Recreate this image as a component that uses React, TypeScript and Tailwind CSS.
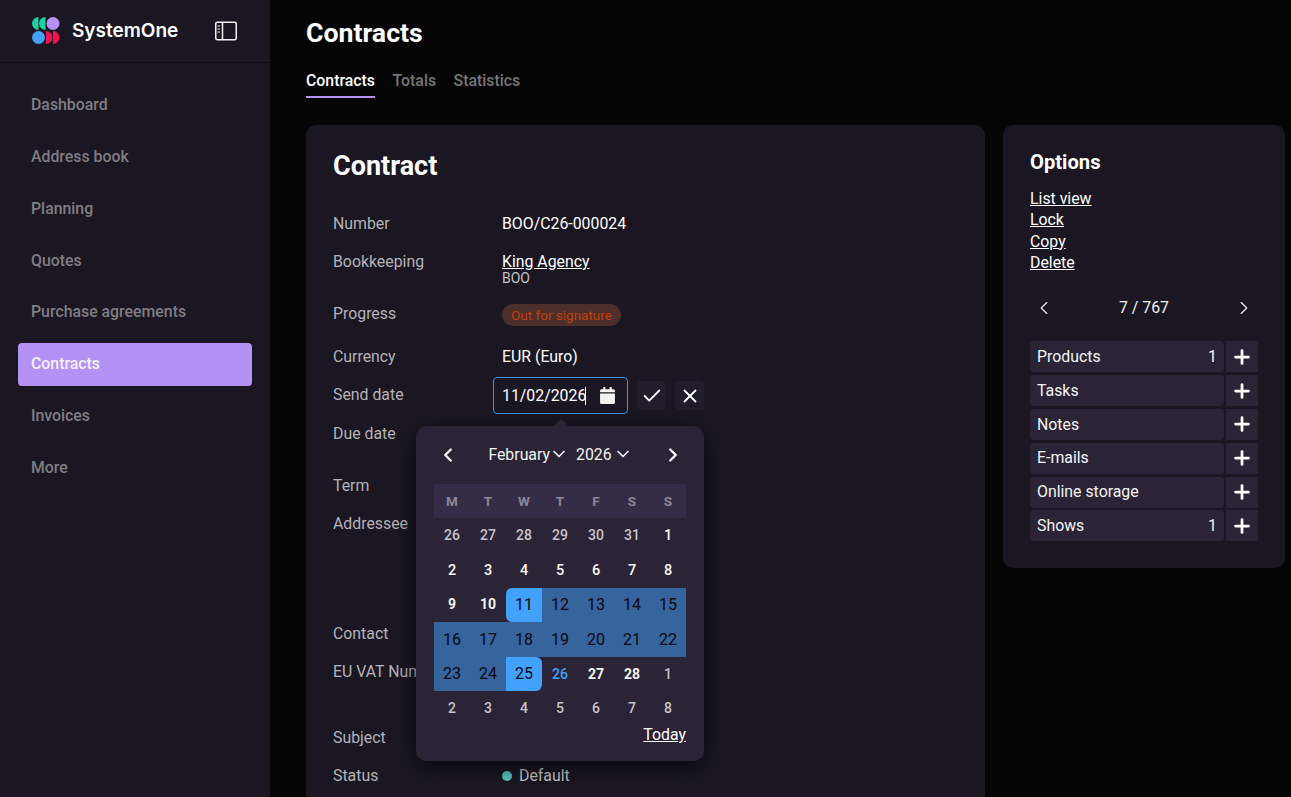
import { Check, ChevronDown, ChevronLeft, ChevronRight, Plus, X } from 'lucide-react'
import { FaCalendar } from 'react-icons/fa'

const navItems = ['Dashboard', 'Address book', 'Planning', 'Quotes', 'Purchase agreements', 'Contracts', 'Invoices', 'More']
const optionLinks = ['List view', 'Lock', 'Copy', 'Delete']
const optionRows = [
  { label: 'Products', count: 1 },
  { label: 'Tasks' },
  { label: 'Notes' },
  { label: 'E-mails' },
  { label: 'Online storage' },
  { label: 'Shows', count: 1 },
]
const weekDays = ['M', 'T', 'W', 'T', 'F', 'S', 'S']

type Day = { n: number; muted?: boolean }
const days: Day[] = [
  { n: 26, muted: true }, { n: 27, muted: true }, { n: 28, muted: true }, { n: 29, muted: true }, { n: 30, muted: true }, { n: 31, muted: true }, { n: 1 },
  { n: 2 }, { n: 3 }, { n: 4 }, { n: 5 }, { n: 6 }, { n: 7 }, { n: 8 },
  { n: 9 }, { n: 10 }, { n: 11 }, { n: 12 }, { n: 13 }, { n: 14 }, { n: 15 },
  { n: 16 }, { n: 17 }, { n: 18 }, { n: 19 }, { n: 20 }, { n: 21 }, { n: 22 },
  { n: 23 }, { n: 24 }, { n: 25 }, { n: 26 }, { n: 27 }, { n: 28 }, { n: 1, muted: true },
  { n: 2, muted: true }, { n: 3, muted: true }, { n: 4, muted: true }, { n: 5, muted: true }, { n: 6, muted: true }, { n: 7, muted: true }, { n: 8, muted: true },
]

const Logo = () => (
  <svg width="28" height="27" viewBox="0 0 28 27" aria-hidden="true">
    <path d="M6.5 0 A6.5 6.5 0 0 0 6.5 13 Z" fill="#1fd0a0" />
    <path d="M13.5 0 A6.5 6.5 0 0 0 13.5 13 Z" fill="#1fd0a0" />
    <circle cx="21" cy="6.5" r="6.5" fill="#b491f5" />
    <circle cx="6.5" cy="20.5" r="6.5" fill="#42a0ff" />
    <path d="M14 14 A6.5 6.5 0 0 1 14 27 Z" fill="#f5104f" />
    <path d="M21 14 A6.5 6.5 0 0 1 21 27 Z" fill="#f5104f" />
  </svg>
)

const PanelIcon = () => (
  <svg width="22" height="20" viewBox="0 0 22 20" fill="none" stroke="#f2f2f2" strokeWidth="1.5" aria-hidden="true">
    <rect x="0.75" y="1.25" width="20.5" height="17.5" rx="1.5" />
    <path d="M7.5 1.25 V18.75" />
    <path d="M2.5 5 H5 M2.5 8 H5 M2.5 11 H5" strokeWidth="1.2" />
  </svg>
)

const Row = ({ label, height, children }: { label: string; height: string; children?: React.ReactNode }) => (
  <div className={`flex ${height}`}>
    <div className="w-[169px] shrink-0 text-[#b4b2b8] leading-5">{label}</div>
    <div className="min-w-0 flex-1 leading-5 text-white">{children}</div>
  </div>
)

const DatePopover = () => (
  <div className="absolute left-[110px] top-[301px] z-10 h-[335px] w-[288px] rounded-[10px] bg-[#2a2436] px-[18px] shadow-[0_6px_24px_rgba(0,0,0,0.65)]">
    <div className="absolute -top-[7px] left-[138px] h-0 w-0 border-x-[7px] border-b-[7px] border-x-transparent border-b-[#2a2436]" />
    <div className="flex h-[58px] items-center justify-between pb-[1px]">
      <ChevronLeft size={22} strokeWidth={2.5} className="ml-[3px] text-white" />
      <div className="flex items-center text-[#f2f2f2]">
        <span>February</span>
        <ChevronDown size={20} strokeWidth={2} className="-ml-[1px]" />
        <span className="ml-[7px]">2026</span>
        <ChevronDown size={20} strokeWidth={2} className="ml-[1px]" />
      </div>
      <ChevronRight size={22} strokeWidth={2.5} className="mr-[2px] text-white" />
    </div>
    <div className="grid h-[34px] grid-cols-7 items-center bg-[#352d47] text-[13.5px] font-bold text-[#8c8794]">
      {weekDays.map((d, i) => (
        <span key={i} className="text-center">{d}</span>
      ))}
    </div>
    <div className="mt-[0.5px] grid auto-rows-[34.6px] grid-cols-7">
      {days.map((d, i) => {
        const start = i === 16
        const end = i === 30
        const inRange = i > 16 && i < 30
        const today = i === 31
        const firstWeeks = i >= 6 && i <= 13
        return (
          <div
            key={i}
            className={`flex items-center justify-center ${
              start ? 'rounded-tl-[6px] rounded-bl-[6px] bg-[#42a0ff] text-[16px] text-[#0a0812]'
              : end ? 'rounded-tr-[6px] rounded-br-[6px] bg-[#42a0ff] text-[16px] text-[#0a0812]'
              : inRange ? 'bg-[#36649c] text-[16px] text-[#0a0812]'
              : today ? 'text-[14px] font-medium text-[#42a0ff]'
              : d.muted ? 'text-[14px] font-medium text-[#c6c4ca]'
              : firstWeeks ? 'text-[14.5px] font-medium text-[#f8f8f8]'
              : 'text-[14px] font-bold text-[#f4f4f4]'
            }`}
          >
            {d.n}
          </div>
        )
      })}
    </div>
    <div className="-mt-[3px] text-right text-white underline">Today</div>
  </div>
)

export default function App() {
  return (
    <div className="flex h-[797px] w-[1291px] overflow-hidden bg-[#050505] text-[15.85px] [font-family:Roboto,sans-serif]">
      <aside className="h-full w-[270px] shrink-0 bg-[#1a1722]">
        <div className="flex h-[63px] items-center border-b border-[#0d0b12] pl-[32px] pb-[1px]">
          <Logo />
          <span className="mt-[1px] ml-[12px] w-[106px] text-[19px] font-semibold whitespace-nowrap text-white [font-family:Inter,sans-serif]">SystemOne</span>
          <span className="ml-[37px] flex"><PanelIcon /></span>
        </div>
        <nav className="mt-[20.4px] flex flex-col gap-[8.85px] px-[18px]">
          {navItems.map((item) => (
            <div
              key={item}
              className={`flex h-[43px] items-center rounded-[4px] px-[13px] font-medium ${
                item === 'Contracts' ? 'bg-[#b491f5] text-[#f6f2fd]' : 'text-[#807d84]'
              }`}
            >
              {item}
            </div>
          ))}
        </nav>
      </aside>

      <main className="min-w-0 flex-1 pl-[36px] pr-[6px]">
        <h1 className="mt-[17px] text-[26.7px] leading-[33px] font-bold text-white">Contracts</h1>
        <div className="mt-[13px] flex h-[35px] gap-[17.5px] font-medium">
          <div className="h-[35px] border-b-2 border-[#b491f5] pt-[8px] leading-5 text-white">Contracts</div>
          <div className="pt-[8px] leading-5 text-[#757578]">Totals</div>
          <div className="pt-[8px] leading-5 text-[#757578]">Statistics</div>
        </div>

        <div className="mt-[27px] flex items-start gap-[18px]">
          <section className="relative h-[700px] w-[679px] shrink-0 rounded-t-[10px] bg-[#1a1722] pl-[27px] pt-[25px]">
            <h2 className="mb-[31px] text-[27px] leading-[33px] font-bold text-white">Contract</h2>
            <Row label="Number" height="h-[38px]">BOO/C26-000024</Row>
            <Row label="Bookkeeping" height="h-[52px]">
              <div className="underline">King Agency</div>
              <div className="-mt-[1px] text-[14px] leading-[14px] text-[#c2c0c6]">BOO</div>
            </Row>
            <Row label="Progress" height="h-[43px]">
              <span className="inline-flex h-[22px] items-center rounded-full bg-[#4c2e2a] px-[9px] text-[13.5px] text-[#c2410c]">Out for signature</span>
            </Row>
            <Row label="Currency" height="h-[38px]">EUR (Euro)</Row>
            <Row label="Send date" height="h-[39px]">
              <div className="-ml-[9px] -mt-[8px] flex items-center">
                <div className="flex h-[37px] w-[135px] items-center rounded-[4px] border border-[#4a90d9] bg-[#1a1722] pl-[8px]">
                  <span>11/02/2026</span>
                  <span className="-ml-[1px] h-[18px] w-px bg-white" />
                  <FaCalendar size={17} className="ml-[13px] text-[#f4f4f4]" />
                </div>
                <div className="ml-[9px] flex h-[29px] w-[29px] items-center justify-center rounded-[4px] bg-[#211d2b]"><Check size={22} strokeWidth={2} /></div>
                <div className="ml-[9px] flex h-[29px] w-[29px] items-center justify-center rounded-[4px] bg-[#211d2b]"><X size={22} strokeWidth={2} /></div>
              </div>
            </Row>
            <Row label="Due date" height="h-[52px]" />
            <Row label="Term" height="h-[38px]" />
            <Row label="Addressee" height="h-[110px]" />
            <Row label="Contact" height="h-[38px]" />
            <Row label="EU VAT Number" height="h-[66px]" />
            <Row label="Subject" height="h-[38px]" />
            <Row label="Status" height="h-[38px]">
              <span className="flex items-center text-[#c9c7cc]">
                <span className="mr-[7px] h-[10px] w-[10px] rounded-full bg-[#5cc9c0]" />
                Default
              </span>
            </Row>
            <DatePopover />
          </section>

          <section className="h-[443px] w-[282px] shrink-0 rounded-[10px] bg-[#1a1722] pl-[27px] pr-[27px] pt-[25px]">
            <h3 className="text-[20.2px] leading-[25px] font-bold text-white">Options</h3>
            <div className="mt-[13px] flex flex-col text-white">
              {optionLinks.map((l) => (
                <a key={l} className="leading-[21.35px] underline">{l}</a>
              ))}
            </div>
            <div className="mt-[23px] flex h-[24px] items-center justify-between px-[3px] text-[#f2f2f2]">
              <ChevronLeft size={22} strokeWidth={1.25} />
              <span>7 / 767</span>
              <ChevronRight size={22} strokeWidth={1.25} />
            </div>
            <div className="mt-[21px] flex flex-col gap-[2.8px]">
              {optionRows.map((r) => (
                <div key={r.label} className="flex h-[31px] gap-[2px]">
                  <div className="flex w-[194px] items-center justify-between rounded-[4px] bg-[#2a2436] px-[7px] text-[#f4f4f4]">
                    <span>{r.label}</span>
                    {r.count ? <span>{r.count}</span> : null}
                  </div>
                  <div className="flex w-[32px] items-center justify-center bg-[#2a2436] text-white">
                    <Plus size={22} strokeWidth={3} />
                  </div>
                </div>
              ))}
            </div>
          </section>
        </div>
      </main>
    </div>
  )
}
